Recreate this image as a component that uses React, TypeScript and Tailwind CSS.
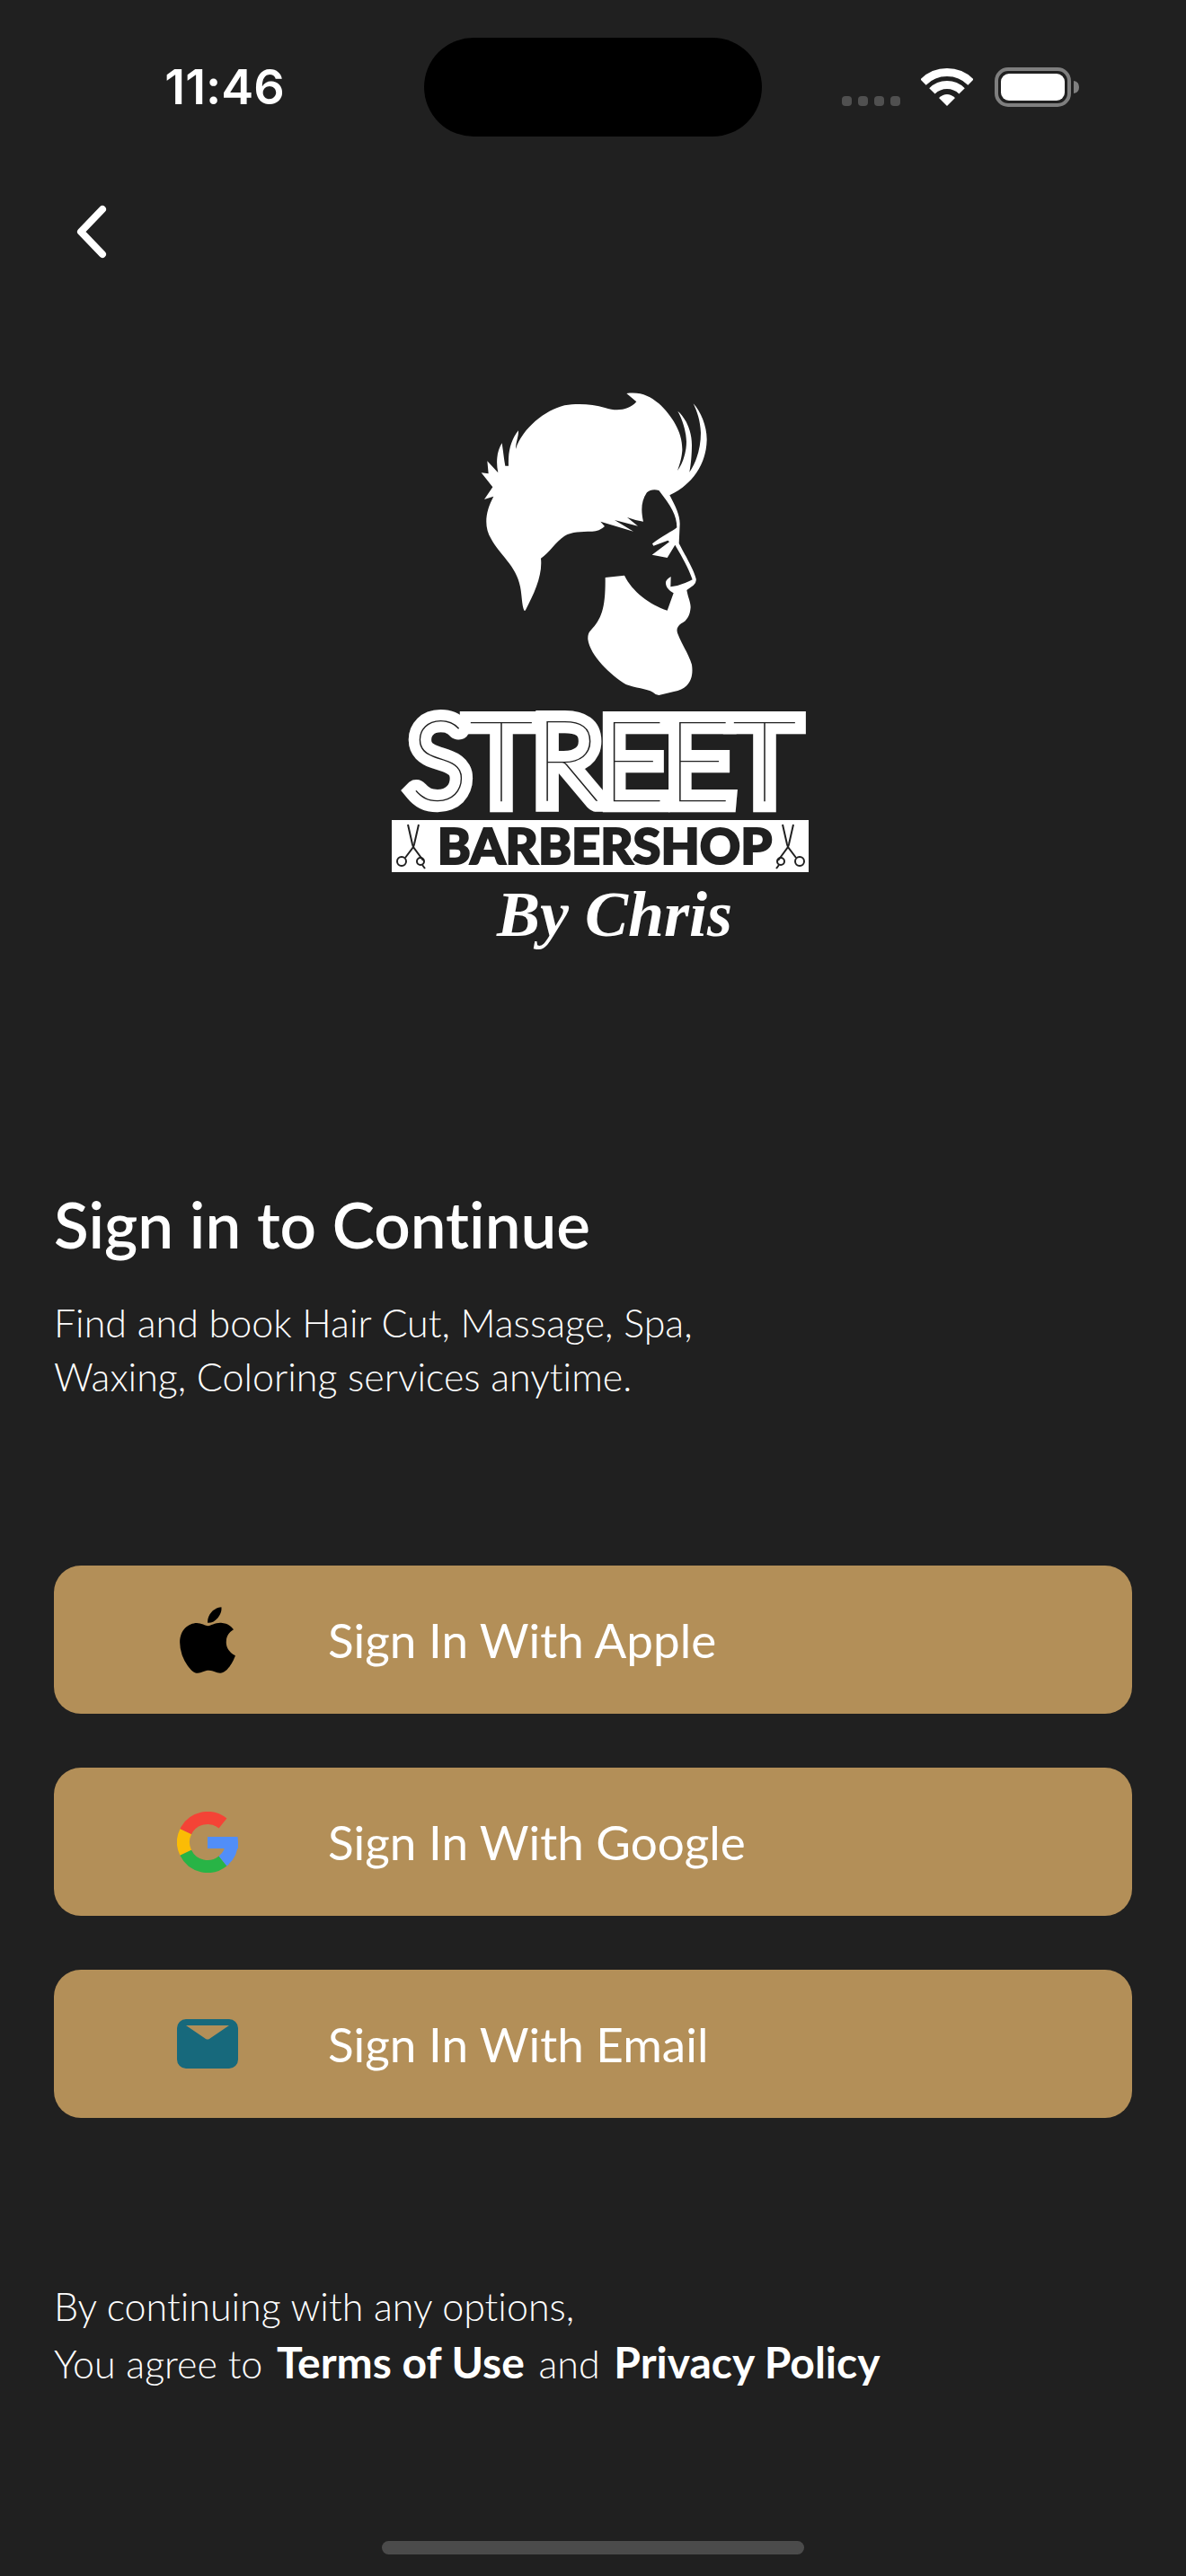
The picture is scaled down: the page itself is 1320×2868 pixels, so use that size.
import type { ReactNode } from "react";
import { FaApple } from "react-icons/fa";

function StatusBar() {
  return (
    <header className="grid grid-cols-[1fr_376px_1fr] items-center pt-[42px]">
      <time className="pl-7 text-center font-['Inter',sans-serif] text-[54px] leading-none font-semibold">
        11:46
      </time>
      <div className="h-[110px] rounded-full bg-black" />
      <div className="flex items-center justify-center gap-6 pr-[30px]">
        <div className="flex items-center gap-[23px]">
          <div className="flex gap-[7px] self-end" aria-hidden>
            <span className="size-[11px] rounded-[4px] bg-[#505050]" />
            <span className="size-[11px] rounded-[4px] bg-[#505050]" />
            <span className="size-[11px] rounded-[4px] bg-[#505050]" />
            <span className="size-[11px] rounded-[4px] bg-[#505050]" />
          </div>
          <svg viewBox="0 0 58 42" className="h-[42px] w-[58px]" aria-hidden>
            <g fill="none" stroke="white" strokeWidth="9">
              <path d="M2.5 15.5a37.5 37.5 0 0 1 53 0" />
              <path d="M12.4 25.4a23.5 23.5 0 0 1 33.2 0" />
            </g>
            <path d="M29 42l-9-9q9-8 18 0z" fill="white" />
          </svg>
        </div>
        <svg viewBox="0 0 94 44" className="h-11 w-[94px]" aria-hidden>
          <rect x="2" y="2" width="81" height="40" rx="13" fill="none" stroke="#7f7f7f" strokeWidth="4" />
          <rect x="7" y="7" width="71" height="30" rx="9" fill="white" />
          <path d="M88 15q6 1 6 7t-6 7z" fill="#7f7f7f" />
        </svg>
      </div>
    </header>
  );
}

function Scissors() {
  return (
    <g fill="none" stroke="#202020" strokeWidth="2">
      <path d="M5 1l5 22 1 3 11 15M17 1l-5 22-1 3-9 12" />
      <circle cx="-2" cy="42" r="5" />
      <circle cx="19" cy="42" r="4" />
      <path d="M21 46l3 4" />
    </g>
  );
}

function Logo() {
  return (
    <svg
      viewBox="410 430 500 640"
      role="img"
      aria-label="Street Barbershop by Chris"
      className="mx-auto w-[500px] max-w-full"
    >
      <path
        transform="translate(500 410) scale(.33333)"
        fill="white"
        d="M592 84C640 78 668 92 700 118C745 160 780 215 778 275C776 300 770 320 762 342C780 318 792 280 792 245C790 205 778 170 763 143C785 160 810 205 810 255C810 295 806 325 802 347C825 315 840 265 840 215C838 175 828 145 815 118C840 145 861 195 860 240C858 330 800 395 736 424C755 460 770 490 770 520L767 585C785 620 815 670 823 700Q828 714 815 725L793 741C797 765 806 780 806 798C804 830 790 845 775 852C762 862 758 870 762 884C775 920 800 955 810 990C816 1030 805 1070 750 1080L700 1092Q690 1092 680 1082C660 1070 620 1068 590 1056C540 1025 470 960 463 905Q462 885 472 876C510 835 522 800 521 699L585 692C610 745 670 790 728 809L749 751C735 742 722 732 723 714Q725 705 740 696L739 730Q775 726 812 706C800 670 775 625 754 590L728 633L677 623L735 580L730 575L682 593L678 586C710 560 745 545 760 532C760 490 740 460 700 408Q675 402 660 415C640 445 640 475 648 512Q620 508 594 498L630 527L552 507L615 545L505 512L519 528Q500 546 475 545C440 546 410 545 385 560C355 580 335 615 306 635C312 690 285 750 254 809L250 809C242 790 243 760 237 730C225 660 165 620 140 570C115 530 120 480 148 428L117 438L145 397L107 349L131 352L127 310L163 349C155 310 160 275 176 250C180 275 182 300 187 326L198 326C196 280 205 240 231 208C232 230 222 245 222 270C245 200 320 140 385 124C430 116 480 120 520 132C560 145 600 140 625 112Z"
      />
      <text
        x="671"
        y="892"
        textAnchor="middle"
        fill="#202020"
        stroke="white"
        strokeWidth="24"
        paintOrder="stroke"
        className="font-['Lato',sans-serif] text-[126px] font-thin"
      >
        STREET
      </text>
      <rect x="436" y="913" width="464" height="58" fill="white" />
      <g transform="translate(449 917)">
        <Scissors />
      </g>
      <g transform="translate(888 917) scale(-1 1)">
        <Scissors />
      </g>
      <text
        x="673"
        y="962"
        textAnchor="middle"
        fill="#202020"
        stroke="#202020"
        strokeWidth="2"
        className="font-['Lato',sans-serif] text-[56px] font-black"
      >
        BARBERSHOP
      </text>
      <text
        x="684"
        y="1042"
        textAnchor="middle"
        fill="white"
        className="font-['Liberation_Serif',serif] text-[72px] font-bold italic"
      >
        By Chris
      </text>
    </svg>
  );
}

function GoogleIcon() {
  return (
    <svg viewBox="0 0 68 68" className="size-[68px]" aria-hidden>
      <g fill="none" strokeWidth="14">
        <path d="M51 13A27 27 0 0 0 9.7 22.2" stroke="#f44336" />
        <path d="M9.7 22.2A27 27 0 0 0 9.7 45.8" stroke="#fbbc05" />
        <path d="M9.7 45.8A27 27 0 0 0 51 55" stroke="#28b446" />
        <path d="M51 55A27 27 0 0 0 61 34" stroke="#518ef8" />
      </g>
      <path d="M34 28h33.500l.5 6v7H34z" fill="#518ef8" />
    </svg>
  );
}

function MailIcon() {
  return (
    <svg viewBox="0 0 68 55" className="h-[55px] w-[68px]" aria-hidden>
      <path
        fill="#17697c"
        fillRule="evenodd"
        d="M10 0h48a10 10 0 0 1 10 10v35a10 10 0 0 1-10 10H10A10 10 0 0 1 0 45V10A10 10 0 0 1 10 0zm0 7l22 15q2 1 4 0L58 7z"
      />
    </svg>
  );
}

type SignInButtonProps = { icon: ReactNode; label: string };

function SignInButton({ icon, label }: SignInButtonProps) {
  return (
    <button
      type="button"
      className="flex h-[165px] w-full items-center gap-[100px] rounded-[30px] bg-[#b38f58] pl-[137px] text-left text-[53px]"
    >
      <span className="flex w-[68px] justify-center">{icon}</span>
      {label}
    </button>
  );
}

const providers = [
  { label: "Sign In With Apple", icon: <FaApple className="size-[84px] shrink-0 text-black" /> },
  { label: "Sign In With Google", icon: <GoogleIcon /> },
  { label: "Sign In With Email", icon: <MailIcon /> },
];

export default function App() {
  return (
    <div className="flex min-h-screen flex-col bg-[#202020] font-['Lato',sans-serif] text-white [font-variant-ligatures:none]">
      <StatusBar />

      <main className="flex flex-col px-[60px] pt-16">
        <button type="button" aria-label="Back" className="size-[84px]">
          <svg viewBox="0 0 84 84" fill="none" stroke="white" strokeWidth="8" strokeLinecap="round" strokeLinejoin="round">
            <path d="M54 17L30 42l24 25" />
          </svg>
        </button>

        <div className="pt-[130px]">
          <Logo />
        </div>

        <h1 className="mt-[253px] text-[71px] leading-[80px] font-semibold">Sign in to Continue</h1>
        <p className="mt-10 text-[43px] leading-[60px] font-light">
          Find and book Hair Cut, Massage, Spa,
          <br />
          Waxing, Coloring services anytime.
        </p>

        <div className="mt-[180px] flex flex-col gap-[60px]">
          {providers.map((p) => (
            <SignInButton key={p.label} icon={p.icon} label={p.label} />
          ))}
        </div>

        <p className="mt-[179px] text-[43px] leading-[62px] font-light">
          By continuing with any options,
          <br />
          You agree to{" "}
          <a href="#terms" className="mx-1 text-[48px] font-bold">
            Terms of Use
          </a>{" "}
          and{" "}
          <a href="#privacy" className="mx-1 text-[48px] font-bold">
            Privacy Policy
          </a>
        </p>
      </main>

      <div className="mx-auto mt-auto mb-6 h-[15px] w-[470px] rounded-full bg-[#4b4b4b]" />
    </div>
  );
}
